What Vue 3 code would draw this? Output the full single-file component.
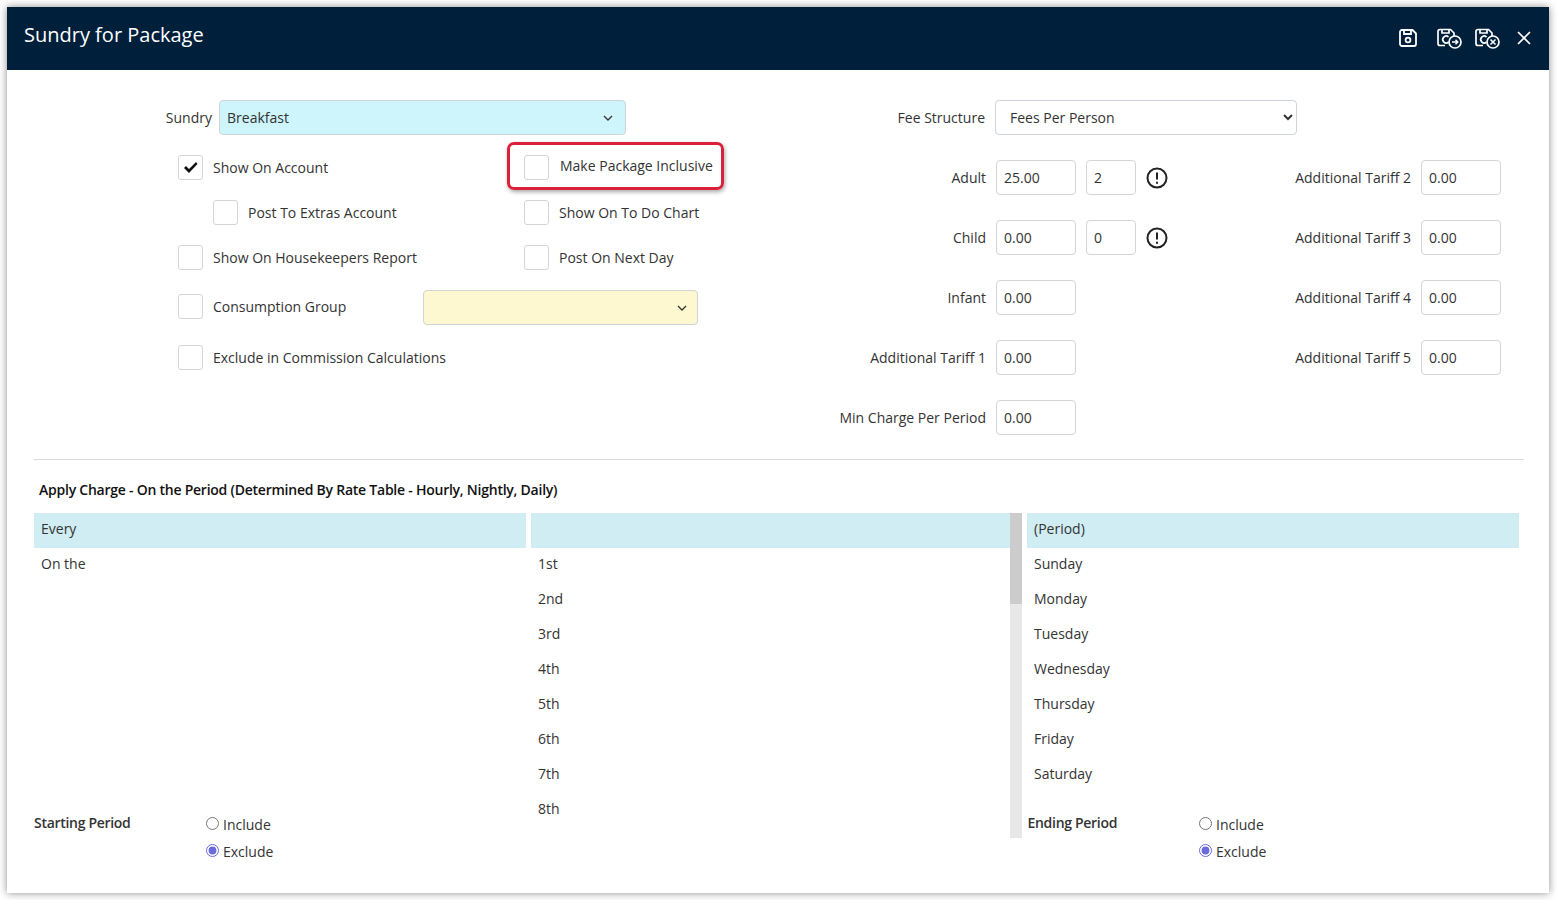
<template>
  <div class="dialog">
    <header class="dialog-header">
      <h1>Sundry for Package</h1>
      <div class="header-icons">
        <svg class="ic-save" width="20" height="20" viewBox="0 0 20 20" fill="none" stroke="#fff" stroke-width="1.8">
          <path d="M4 2h10.500L18 5.500V16a2 2 0 0 1-2 2H4a2 2 0 0 1-2-2V4a2 2 0 0 1 2-2z" stroke-linejoin="round" />
          <path d="M6 2v4h7V2" />
          <circle cx="10" cy="12" r="2.400" />
        </svg>
        <svg class="ic-copy" width="25" height="21" viewBox="0 0 25 21" fill="none" stroke="#fff" stroke-width="1.700">
          <path d="M3 1.500h10.500l3.500 3.500v4M8 17.500H3a2 2 0 0 1-2-2V3.500a2 2 0 0 1 2-2" stroke-linejoin="round" />
          <path d="M5 1.500v3.500h7V1.500" />
          <path d="M11.500 9a3.400 3.400 0 1 0 0 5" />
          <circle cx="18" cy="14" r="6" fill="#001f3b" />
          <path d="M15 14h5.500M18.500 11.700l2.300 2.300-2.300 2.300" stroke-width="1.500" />
        </svg>
        <svg class="ic-cancel" width="25" height="21" viewBox="0 0 25 21" fill="none" stroke="#fff" stroke-width="1.700">
          <path d="M3 1.500h10.500l3.500 3.500v4M8 17.500H3a2 2 0 0 1-2-2V3.500a2 2 0 0 1 2-2" stroke-linejoin="round" />
          <path d="M5 1.500v3.500h7V1.500" />
          <path d="M11.500 9a3.400 3.400 0 1 0 0 5" />
          <circle cx="18" cy="14" r="6" fill="#001f3b" />
          <path d="M15.500 11.500l5 5M20.500 11.500l-5 5" stroke-width="1.500" />
        </svg>
        <svg class="ic-close" width="14" height="14" viewBox="0 0 14 14" stroke="#fff" stroke-width="1.700">
          <path d="M1 1l12 12M13 1L1 13" />
        </svg>
      </div>
    </header>

    <div class="dialog-body">
      <div class="top">
        <div class="left">
          <div class="sundry-row">
            <label class="sundry-label">Sundry</label>
            <div class="fake-select sundry-select">
              <span>Breakfast</span>
              <svg width="10" height="6" viewBox="0 0 10 6" fill="none" stroke="#333" stroke-width="1.300"><path d="M1 1l4 4 4-4" /></svg>
            </div>
          </div>

          <div class="check-row">
            <label class="check col1">
              <span class="box">
                <svg width="15" height="13" viewBox="0 0 15 13"><path d="M1 7l2-2 3 3 7-7 1.500 2L6 12z" fill="#111" /></svg>
              </span>
              Show On Account
            </label>
            <label class="check highlighted">
              <span class="box"></span>
              <span class="inclusive-text">Make Package Inclusive</span>
              <span class="red-mark"></span>
            </label>
          </div>

          <div class="check-row">
            <label class="check col1 indent"><span class="box"></span>Post To Extras Account</label>
            <label class="check"><span class="box"></span>Show On To Do Chart</label>
          </div>

          <div class="check-row">
            <label class="check col1"><span class="box"></span>Show On Housekeepers Report</label>
            <label class="check"><span class="box"></span>Post On Next Day</label>
          </div>

          <div class="check-row consumption">
            <label class="check consumption-check"><span class="box"></span>Consumption Group</label>
            <div class="fake-select group-select">
              <span></span>
              <svg width="10" height="6" viewBox="0 0 10 6" fill="none" stroke="#333" stroke-width="1.300"><path d="M1 1l4 4 4-4" /></svg>
            </div>
          </div>

          <div class="check-row">
            <label class="check col1"><span class="box"></span>Exclude in Commission Calculations</label>
          </div>
        </div>

        <div class="fees">
          <label class="fee-label fee-structure-label">Fee Structure</label>
          <select class="fee-structure">
            <option>Fees Per Person</option>
          </select>

          <template v-for="row in feeRows" :key="row.label">
            <label class="fee-label">{{ row.label }}</label>
            <input class="field" type="text" :value="row.value" />
            <input v-if="row.qty" class="field" type="text" :value="row.qty" />
            <span v-else></span>
            <svg v-if="row.qty" class="alert" width="22" height="22" viewBox="0 0 22 22" fill="none" stroke="#222" stroke-width="2">
              <circle cx="11" cy="11" r="9.500" />
              <path d="M11 5.500v7M11 14.800v2" />
            </svg>
            <span v-else></span>
            <label class="fee-label">{{ row.extra }}</label>
            <input v-if="row.extra" class="field" type="text" value="0.00" />
            <span v-else></span>
          </template>
        </div>
      </div>

      <hr class="divider" />

      <div class="section-title">Apply Charge - On the Period (Determined By Rate Table - Hourly, Nightly, Daily)</div>

      <div class="lists">
        <div class="list">
          <div v-for="(item, i) in everyList" :key="item" class="list-item" :class="{ selected: i === 0 }">{{ item }}</div>
        </div>
        <div class="list-wrap">
          <div class="list">
            <div v-for="(item, i) in dayList" :key="i" class="list-item" :class="{ selected: i === 0 }">{{ item }}</div>
          </div>
          <div class="scrollbar"><div class="thumb"></div></div>
        </div>
        <div class="list">
          <div v-for="(item, i) in periodList" :key="item" class="list-item" :class="{ selected: i === 0 }">{{ item }}</div>
        </div>
      </div>

      <div class="period-row">
        <div class="period start">
          <div class="period-label">Starting Period</div>
          <div class="radios">
            <label><input type="radio" name="starting" />Include</label>
            <label><input type="radio" name="starting" checked />Exclude</label>
          </div>
        </div>
        <div class="period">
          <div class="period-label end-label">Ending Period</div>
          <div class="radios">
            <label><input type="radio" name="ending" />Include</label>
            <label><input type="radio" name="ending" checked />Exclude</label>
          </div>
        </div>
      </div>
    </div>
  </div>
</template>

<script setup>
const feeRows = [
  { label: 'Adult', value: '25.00', qty: '2', extra: 'Additional Tariff 2' },
  { label: 'Child', value: '0.00', qty: '0', extra: 'Additional Tariff 3' },
  { label: 'Infant', value: '0.00', extra: 'Additional Tariff 4' },
  { label: 'Additional Tariff 1', value: '0.00', extra: 'Additional Tariff 5' },
  { label: 'Min Charge Per Period', value: '0.00', extra: '' },
]

const everyList = ['Every', 'On the']
const dayList = ['', '1st', '2nd', '3rd', '4th', '5th', '6th', '7th', '8th']
const periodList = ['(Period)', 'Sunday', 'Monday', 'Tuesday', 'Wednesday', 'Thursday', 'Friday', 'Saturday']
</script>

<style>
html,
body {
  margin: 0;
  background: #fff;
}
</style>

<style scoped>
.dialog {
  box-sizing: border-box;
  width: 1542px;
  height: 886px;
  margin: 7px;
  background: #fff;
  box-shadow: 0 0 8px rgba(0, 0, 0, 0.45);
  font-family: "Open Sans", sans-serif;
  font-size: 14px;
  color: #333;
  overflow: hidden;
}

.dialog-header {
  height: 63px;
  background: #001f3b;
  display: flex;
  align-items: center;
  justify-content: space-between;
  padding: 0 18px 0 17px;
  color: #fff;
}

.dialog-header h1 {
  margin: 0 0 9px;
  font-size: 20px;
  font-weight: 500;
}

.header-icons {
  display: flex;
  align-items: center;
  margin-bottom: 2px;
}

.ic-save {
  margin-right: 19px;
}

.ic-copy {
  margin-top: 2px;
  margin-right: 13px;
}

.ic-cancel {
  margin-top: 2px;
  margin-right: 17px;
}

.dialog-body {
  padding: 30px 25px 0 27px;
}

.top {
  display: flex;
  height: 335px;
}

.left {
  width: 786px;
  display: flex;
  flex-direction: column;
  gap: 20px;
}

.sundry-row {
  display: flex;
  align-items: center;
  gap: 7px;
}

.sundry-label {
  width: 178px;
  text-align: right;
}

.fake-select {
  box-sizing: border-box;
  height: 35px;
  border: 1px solid #ced4da;
  border-radius: 4px;
  display: flex;
  align-items: center;
  justify-content: space-between;
  padding: 0 12px 0 7px;
}

.sundry-select {
  width: 407px;
  background: #cdf5fb;
}

.group-select {
  width: 275px;
  background: #fdf8cf;
  margin-left: 245px;
  padding-right: 10px;
}

.check-row {
  display: flex;
  align-items: center;
  padding-left: 144px;
  min-height: 25px;
}

.check {
  display: flex;
  align-items: center;
  gap: 10px;
  height: 25px;
}

.col1 {
  width: 346px;
}

.indent {
  box-sizing: border-box;
  padding-left: 35px;
}

.box {
  box-sizing: border-box;
  width: 25px;
  height: 25px;
  border: 1px solid #d5d5d5;
  border-radius: 3px;
  background: #fff;
  display: flex;
  align-items: center;
  justify-content: center;
  flex-shrink: 0;
}

.highlighted {
  position: relative;
}

.inclusive-text {
  margin: -4px 0 0 1px;
  white-space: nowrap;
}

.red-mark {
  position: absolute;
  left: -17px;
  top: -13px;
  width: 217px;
  height: 48px;
  box-sizing: border-box;
  border: 3px solid #dc2039;
  border-radius: 7px;
  box-shadow: 1px 2px 4px rgba(0, 0, 0, 0.35);
}

.consumption-check {
  width: 0;
  white-space: nowrap;
  margin-top: -2px;
}

.fees {
  flex: 1;
  display: grid;
  grid-template-columns: 166px 80px 50px 22px 233px 80px;
  grid-auto-rows: 35px;
  gap: 25px 10px;
  align-items: center;
  align-content: start;
}

.fee-label {
  text-align: right;
  white-space: nowrap;
}

.fee-structure-label {
  margin-right: 1px;
}

.fee-structure {
  grid-column: 2 / span 5;
  box-sizing: border-box;
  width: 302px;
  height: 35px;
  margin-left: -1px;
  padding: 0 10px;
  border: 1px solid #ced4da;
  border-radius: 4px;
  background: #fff;
  font: inherit;
  color: #333;
}

.field {
  box-sizing: border-box;
  width: 100%;
  height: 35px;
  border: 1px solid #d5d5d5;
  border-radius: 4px;
  padding: 0 7px;
  font: inherit;
  color: #333;
  outline: none;
}

.alert {
  display: block;
}

.divider {
  margin: 24px 0 20px;
  border: 0;
  border-top: 1px solid #d9d9d9;
}

.section-title {
  padding-left: 5px;
  font-weight: 600;
  line-height: 20px;
  color: #111;
  letter-spacing: -0.24px;
}

.lists {
  display: grid;
  grid-template-columns: 492px 491px 492px;
  gap: 5px;
  height: 325px;
  margin-top: 13px;
  width: 1485px;
}

.list-wrap {
  display: flex;
  height: 325px;
}

.list {
  flex: 1;
  height: 325px;
  overflow: hidden;
}

.list-item {
  box-sizing: border-box;
  height: 35px;
  line-height: 32px;
  padding-left: 7px;
}

.selected {
  background: #cfedf3;
}

.scrollbar {
  width: 12px;
  background: #e8e8e8;
}

.thumb {
  height: 91px;
  background: #ccc;
}

.period-row {
  display: flex;
  margin-top: -27px;
  position: relative;
}

.period {
  display: flex;
}

.start {
  width: 993.500px;
}

.period-label {
  width: 172px;
  padding-top: 2px;
  font-weight: 600;
  line-height: 20px;
  letter-spacing: -0.3px;
}

.end-label {
  width: 171.500px;
}

.radios {
  display: flex;
  flex-direction: column;
}

.radios label {
  display: flex;
  align-items: center;
  height: 27px;
  gap: 4px;
}

.radios input {
  margin: 0;
  width: 13px;
  height: 13px;
  accent-color: #6b6bdc;
  position: relative;
  top: -1px;
}
</style>
